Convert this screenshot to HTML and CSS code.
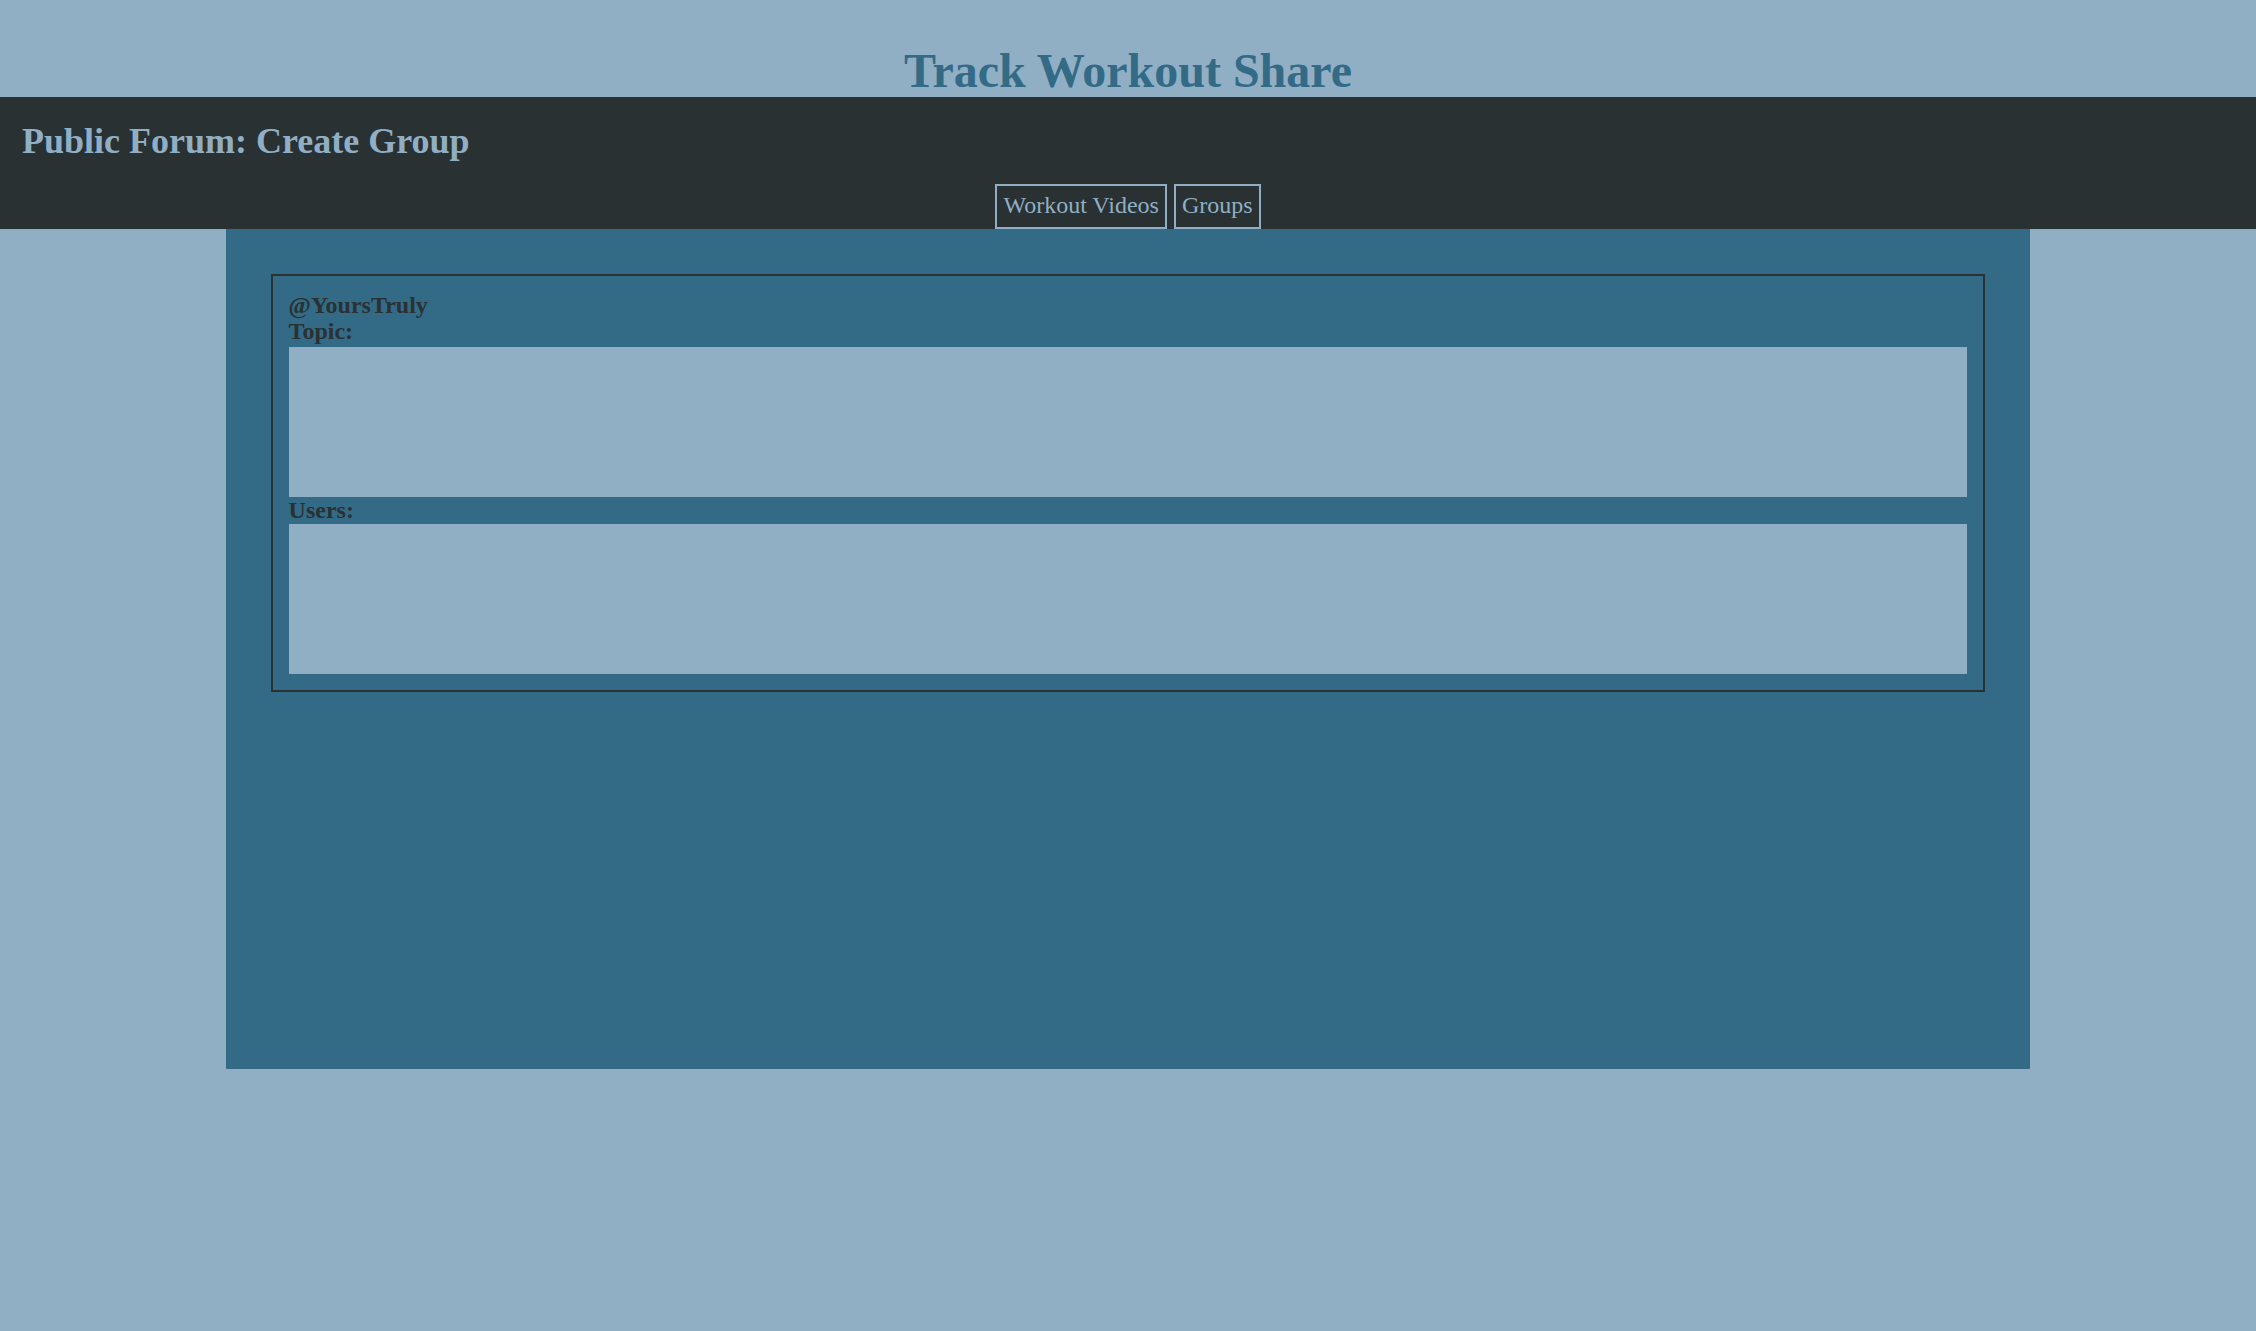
FILE: index.html
```html
<!DOCTYPE html>
<html lang="en">
<head>
<meta charset="utf-8">
<title>Track Workout Share</title>
<link rel="stylesheet" href="styles.css">
</head>
<body>
  <h1 class="site-title">Track Workout Share</h1>
  <header class="top-bar">
    <h2 class="page-title">Public Forum: Create Group</h2>
    <nav class="nav">
      <button class="nav-btn" type="button">Workout Videos</button>
      <button class="nav-btn" type="button">Groups</button>
    </nav>
  </header>
  <main class="panel">
    <form class="card">
      <div class="user">@YoursTruly</div>
      <label class="field-label" for="topic">Topic:</label>
      <textarea id="topic" class="field field-topic"></textarea>
      <label class="field-label" for="users">Users:</label>
      <textarea id="users" class="field field-users"></textarea>
    </form>
  </main>
</body>
</html>
```

FILE: styles.css
```css
* { box-sizing: border-box; }

html, body {
  margin: 0;
  padding: 0;
  background: #90AFC5;
  font-family: "Liberation Serif", "Times New Roman", serif;
}

.site-title {
  margin: 0;
  padding-top: 44px;
  font-size: 48px;
  font-weight: bold;
  line-height: 53px;
  text-align: center;
  color: #336B87;
}

.top-bar {
  background: #2A3132;
  display: flex;
  flex-direction: column;
  padding-top: 24px;
}

.page-title {
  margin: 0 0 23px 0;
  padding-left: 22px;
  font-size: 36px;
  font-weight: bold;
  line-height: 40px;
  color: #90AFC5;
}

.nav {
  display: flex;
  justify-content: center;
  gap: 7px;
}

.nav-btn {
  font-family: "Liberation Serif", "Times New Roman", serif;
  font-size: 24px;
  line-height: 27px;
  color: #90AFC5;
  background: transparent;
  border: 2px solid #90AFC5;
  padding: 6px 6px 8px 6px;
  margin: 0;
  border-radius: 0;
  height: 45px;
}

.panel {
  width: 80%;
  height: 840px;
  margin: 0 auto;
  padding: 45px;
  background: #336B87;
}

.card {
  display: flex;
  flex-direction: column;
  border: 2px solid #2A3132;
  padding: 16px;
  color: #2A3132;
}

.user,
.field-label {
  font-size: 24px;
  font-weight: bold;
  line-height: 26px;
}

.field {
  display: block;
  width: 100%;
  height: 150px;
  border: none;
  background: #90AFC5;
  resize: none;
  margin: 0;
  padding: 0;
}

.field-topic { margin-top: 3px; }
.field-users { margin-top: 1px; }
```
